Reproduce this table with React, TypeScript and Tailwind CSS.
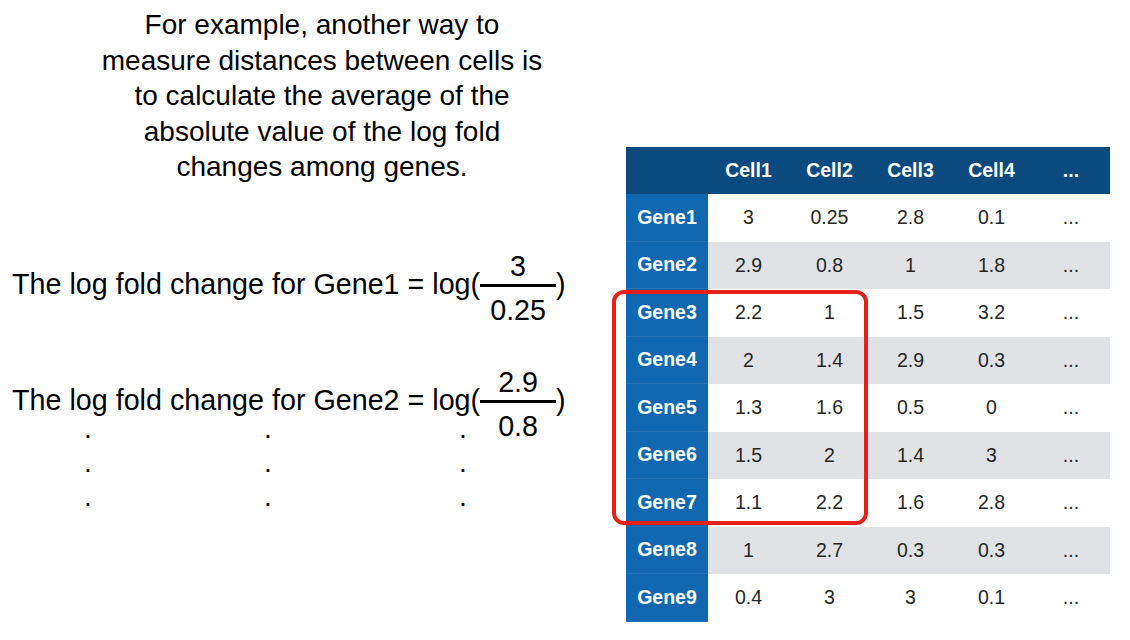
const ROWS: string[][] = [
  ["Gene1", "3", "0.25", "2.8", "0.1"],
  ["Gene2", "2.9", "0.8", "1", "1.8"],
  ["Gene3", "2.2", "1", "1.5", "3.2"],
  ["Gene4", "2", "1.4", "2.9", "0.3"],
  ["Gene5", "1.3", "1.6", "0.5", "0"],
  ["Gene6", "1.5", "2", "1.4", "3"],
  ["Gene7", "1.1", "2.2", "1.6", "2.8"],
  ["Gene8", "1", "2.7", "0.3", "0.3"],
  ["Gene9", "0.4", "3", "3", "0.1"],
];

const HEADERS = ["Cell1", "Cell2", "Cell3", "Cell4", "..."];

function Fraction({ top, bottom }: { top: string; bottom: string }) {
  return (
    <span className="my-[-25px] flex w-[76px] flex-col items-center pt-[9px]">
      <span className="leading-[30px]">{top}</span>
      <span className="mt-[3px] h-[3px] w-full bg-black" />
      <span className="mt-[8px] leading-[30px]">{bottom}</span>
    </span>
  );
}

function Equation({ gene, top, bottom }: { gene: string; top: string; bottom: string }) {
  return (
    <div className="flex items-center pl-[12px] text-[28.7px] leading-[34px]">
      <span className="whitespace-pre">The log fold change for {gene} = log(</span>
      <Fraction top={top} bottom={bottom} />
      <span>)</span>
    </div>
  );
}

function DotRow() {
  return (
    <div className="grid grid-cols-[180px_195px_8px] pl-[84px] leading-[34px]">
      <span>.</span>
      <span>.</span>
      <span>.</span>
    </div>
  );
}

function GeneTable() {
  return (
    <div className="relative w-[484px] text-[19.5px]">
      <div className="grid h-[47px] grid-cols-[82px_81px_81px_81px_81px_78px] items-center bg-[#0b4a7e] font-bold text-white">
        <span />
        {HEADERS.map((h) => (
          <span key={h} className="text-center">
            {h}
          </span>
        ))}
      </div>
      {ROWS.map((row, i) => (
        <div
          key={row[0]}
          className={`grid h-[47.5px] grid-cols-[82px_81px_81px_81px_81px_78px] ${
            i % 2 === 1 ? "bg-[#e1e2e6]" : "bg-white"
          }`}
        >
          <span className="flex items-center justify-center border-b border-[#2573b4] bg-[#1168b1] font-bold text-white">
            {row[0]}
          </span>
          {row.slice(1).map((v, j) => (
            <span key={j} className="flex items-center justify-center text-[#262626]">
              {v}
            </span>
          ))}
          <span className="flex items-center justify-center text-[#262626]">...</span>
        </div>
      ))}
      <div
        className="absolute left-[-14px] top-[143px] h-[235px] w-[256px] rounded-[12px] border-4 border-[#e8201a]"
        aria-hidden
      />
    </div>
  );
}

export default function App() {
  return (
    <div
      className="flex h-[640px] w-[1130px] overflow-hidden bg-white text-black"
      style={{ fontFamily: '"Liberation Sans", Arial, sans-serif' }}
    >
      <div className="w-[626px] shrink-0 text-[28px]">
        <div className="w-[644px] pt-[7px] text-center leading-[35.5px]">
          <p>For example, another way to</p>
          <p>measure distances between cells is</p>
          <p>to calculate the average of the</p>
          <p>absolute value of the log fold</p>
          <p>changes among genes.</p>
        </div>
        <div className="mt-[82px]">
          <Equation gene="Gene1" top="3" bottom="0.25" />
        </div>
        <div className="mt-[82px]">
          <Equation gene="Gene2" top="2.9" bottom="0.8" />
        </div>
        <div className="mt-[-5px]">
          <DotRow />
          <DotRow />
          <DotRow />
        </div>
      </div>
      <div className="pt-[147px]">
        <GeneTable />
      </div>
    </div>
  );
}
